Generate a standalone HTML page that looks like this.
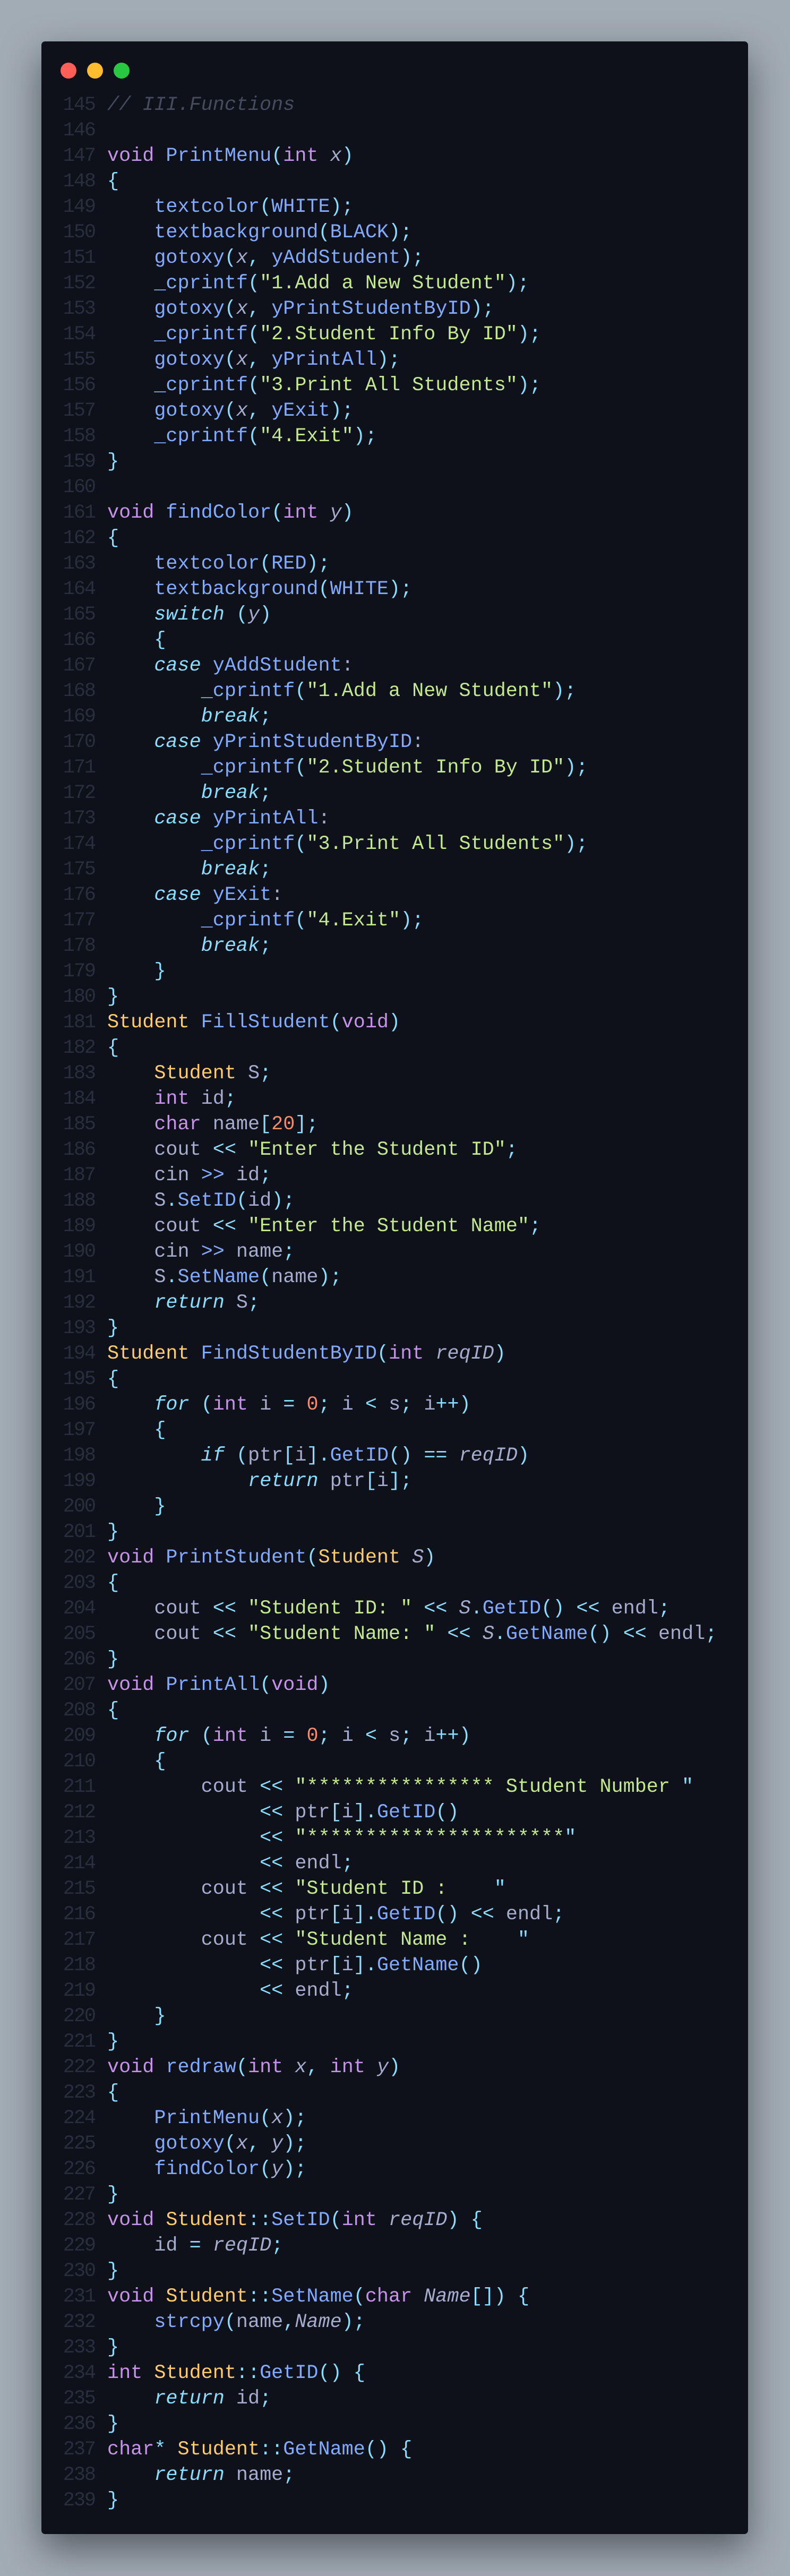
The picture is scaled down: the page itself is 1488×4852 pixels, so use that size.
<!DOCTYPE html>
<html><head><meta charset="utf-8"><style>
html,body{margin:0;padding:0}
body{width:1488px;height:4852px;background:#a2acb5;position:relative;overflow:hidden}
.win{position:absolute;left:78px;top:78px;width:1331px;height:4695px;background:#0f111a;border-radius:7px;box-shadow:0 28px 70px rgba(20,25,32,.55)}
.dot{position:absolute;width:30px;height:30px;border-radius:50%}
.code,.gut{position:absolute;top:174px;font-family:"Liberation Mono",monospace;font-size:36.8px;line-height:48px;white-space:pre}
.gut{left:100px;width:79px;text-align:right;color:#292d3e;letter-spacing:-2px}
.code{left:202px;color:#a6accd}
.k{color:#c792ea}.f{color:#82aaff}.p{color:#89ddff}.s{color:#c3e88d}.n{color:#f78c6c}.t{color:#ffcb6b}
.i{color:#89ddff;font-style:italic}.a{color:#a6accd;font-style:italic}.c{color:#464b5d;font-style:italic}
</style></head><body>
<div class="win"></div>
<div class="dot" style="left:114px;top:118px;background:#ff5f57"></div>
<div class="dot" style="left:164px;top:118px;background:#febc2e"></div>
<div class="dot" style="left:214px;top:118px;background:#28c840"></div>
<div class="gut">145
146
147
148
149
150
151
152
153
154
155
156
157
158
159
160
161
162
163
164
165
166
167
168
169
170
171
172
173
174
175
176
177
178
179
180
181
182
183
184
185
186
187
188
189
190
191
192
193
194
195
196
197
198
199
200
201
202
203
204
205
206
207
208
209
210
211
212
213
214
215
216
217
218
219
220
221
222
223
224
225
226
227
228
229
230
231
232
233
234
235
236
237
238
239</div>
<div class="code"><span class="c">// III.Functions</span>

<span class="k">void</span> <span class="f">PrintMenu</span><span class="p">(</span><span class="k">int</span> <span class="a">x</span><span class="p">)</span>
<span class="p">{</span>
    <span class="f">textcolor</span><span class="p">(</span><span class="f">WHITE</span><span class="p">);</span>
    <span class="f">textbackground</span><span class="p">(</span><span class="f">BLACK</span><span class="p">);</span>
    <span class="f">gotoxy</span><span class="p">(</span><span class="a">x</span><span class="p">,</span> <span class="f">yAddStudent</span><span class="p">);</span>
    <span class="f">_cprintf</span><span class="p">(</span><span class="s">"1.Add a New Student"</span><span class="p">);</span>
    <span class="f">gotoxy</span><span class="p">(</span><span class="a">x</span><span class="p">,</span> <span class="f">yPrintStudentByID</span><span class="p">);</span>
    <span class="f">_cprintf</span><span class="p">(</span><span class="s">"2.Student Info By ID"</span><span class="p">);</span>
    <span class="f">gotoxy</span><span class="p">(</span><span class="a">x</span><span class="p">,</span> <span class="f">yPrintAll</span><span class="p">);</span>
    <span class="f">_cprintf</span><span class="p">(</span><span class="s">"3.Print All Students"</span><span class="p">);</span>
    <span class="f">gotoxy</span><span class="p">(</span><span class="a">x</span><span class="p">,</span> <span class="f">yExit</span><span class="p">);</span>
    <span class="f">_cprintf</span><span class="p">(</span><span class="s">"4.Exit"</span><span class="p">);</span>
<span class="p">}</span>

<span class="k">void</span> <span class="f">findColor</span><span class="p">(</span><span class="k">int</span> <span class="a">y</span><span class="p">)</span>
<span class="p">{</span>
    <span class="f">textcolor</span><span class="p">(</span><span class="f">RED</span><span class="p">);</span>
    <span class="f">textbackground</span><span class="p">(</span><span class="f">WHITE</span><span class="p">);</span>
    <span class="i">switch</span> <span class="p">(</span><span class="a">y</span><span class="p">)</span>
    <span class="p">{</span>
    <span class="i">case</span> <span class="f">yAddStudent</span>:
        <span class="f">_cprintf</span><span class="p">(</span><span class="s">"1.Add a New Student"</span><span class="p">);</span>
        <span class="i">break</span><span class="p">;</span>
    <span class="i">case</span> <span class="f">yPrintStudentByID</span>:
        <span class="f">_cprintf</span><span class="p">(</span><span class="s">"2.Student Info By ID"</span><span class="p">);</span>
        <span class="i">break</span><span class="p">;</span>
    <span class="i">case</span> <span class="f">yPrintAll</span>:
        <span class="f">_cprintf</span><span class="p">(</span><span class="s">"3.Print All Students"</span><span class="p">);</span>
        <span class="i">break</span><span class="p">;</span>
    <span class="i">case</span> <span class="f">yExit</span>:
        <span class="f">_cprintf</span><span class="p">(</span><span class="s">"4.Exit"</span><span class="p">);</span>
        <span class="i">break</span><span class="p">;</span>
    <span class="p">}</span>
<span class="p">}</span>
<span class="t">Student</span> <span class="f">FillStudent</span><span class="p">(</span><span class="k">void</span><span class="p">)</span>
<span class="p">{</span>
    <span class="t">Student</span> S<span class="p">;</span>
    <span class="k">int</span> id<span class="p">;</span>
    <span class="k">char</span> name<span class="p">[</span><span class="n">20</span><span class="p">];</span>
    cout <span class="p">&lt;&lt;</span> <span class="s">"Enter the Student ID"</span><span class="p">;</span>
    cin <span class="f">&gt;&gt;</span> id<span class="p">;</span>
    S<span class="p">.</span><span class="f">SetID</span><span class="p">(</span>id<span class="p">);</span>
    cout <span class="p">&lt;&lt;</span> <span class="s">"Enter the Student Name"</span><span class="p">;</span>
    cin <span class="f">&gt;&gt;</span> name<span class="p">;</span>
    S<span class="p">.</span><span class="f">SetName</span><span class="p">(</span>name<span class="p">);</span>
    <span class="i">return</span> S<span class="p">;</span>
<span class="p">}</span>
<span class="t">Student</span> <span class="f">FindStudentByID</span><span class="p">(</span><span class="k">int</span> <span class="a">reqID</span><span class="p">)</span>
<span class="p">{</span>
    <span class="i">for</span> <span class="p">(</span><span class="k">int</span> i <span class="p">=</span> <span class="n">0</span><span class="p">;</span> i <span class="p">&lt;</span> s<span class="p">;</span> i<span class="p">++)</span>
    <span class="p">{</span>
        <span class="i">if</span> <span class="p">(</span>ptr<span class="p">[</span>i<span class="p">].</span><span class="f">GetID</span><span class="p">()</span> <span class="p">==</span> <span class="a">reqID</span><span class="p">)</span>
            <span class="i">return</span> ptr<span class="p">[</span>i<span class="p">];</span>
    <span class="p">}</span>
<span class="p">}</span>
<span class="k">void</span> <span class="f">PrintStudent</span><span class="p">(</span><span class="t">Student</span> <span class="a">S</span><span class="p">)</span>
<span class="p">{</span>
    cout <span class="p">&lt;&lt;</span> <span class="s">"Student ID: "</span> <span class="p">&lt;&lt;</span> <span class="a">S</span><span class="p">.</span><span class="f">GetID</span><span class="p">()</span> <span class="p">&lt;&lt;</span> endl<span class="p">;</span>
    cout <span class="p">&lt;&lt;</span> <span class="s">"Student Name: "</span> <span class="p">&lt;&lt;</span> <span class="a">S</span><span class="p">.</span><span class="f">GetName</span><span class="p">()</span> <span class="p">&lt;&lt;</span> endl<span class="p">;</span>
<span class="p">}</span>
<span class="k">void</span> <span class="f">PrintAll</span><span class="p">(</span><span class="k">void</span><span class="p">)</span>
<span class="p">{</span>
    <span class="i">for</span> <span class="p">(</span><span class="k">int</span> i <span class="p">=</span> <span class="n">0</span><span class="p">;</span> i <span class="p">&lt;</span> s<span class="p">;</span> i<span class="p">++)</span>
    <span class="p">{</span>
        cout <span class="p">&lt;&lt;</span> <span class="s">"**************** Student Number </span><span class="p">"</span>
             <span class="p">&lt;&lt;</span> ptr<span class="p">[</span>i<span class="p">].</span><span class="f">GetID</span><span class="p">()</span>
             <span class="p">&lt;&lt;</span> <span class="s">"**********************</span><span class="p">"</span>
             <span class="p">&lt;&lt;</span> endl<span class="p">;</span>
        cout <span class="p">&lt;&lt;</span> <span class="s">"Student ID :    </span><span class="p">"</span>
             <span class="p">&lt;&lt;</span> ptr<span class="p">[</span>i<span class="p">].</span><span class="f">GetID</span><span class="p">()</span> <span class="p">&lt;&lt;</span> endl<span class="p">;</span>
        cout <span class="p">&lt;&lt;</span> <span class="s">"Student Name :    </span><span class="p">"</span>
             <span class="p">&lt;&lt;</span> ptr<span class="p">[</span>i<span class="p">].</span><span class="f">GetName</span><span class="p">()</span>
             <span class="p">&lt;&lt;</span> endl<span class="p">;</span>
    <span class="p">}</span>
<span class="p">}</span>
<span class="k">void</span> <span class="f">redraw</span><span class="p">(</span><span class="k">int</span> <span class="a">x</span><span class="p">,</span> <span class="k">int</span> <span class="a">y</span><span class="p">)</span>
<span class="p">{</span>
    <span class="f">PrintMenu</span><span class="p">(</span><span class="a">x</span><span class="p">);</span>
    <span class="f">gotoxy</span><span class="p">(</span><span class="a">x</span><span class="p">,</span> <span class="a">y</span><span class="p">);</span>
    <span class="f">findColor</span><span class="p">(</span><span class="a">y</span><span class="p">);</span>
<span class="p">}</span>
<span class="k">void</span> <span class="t">Student</span><span class="p">::</span><span class="f">SetID</span><span class="p">(</span><span class="k">int</span> <span class="a">reqID</span><span class="p">)</span> <span class="p">{</span>
    id <span class="p">=</span> <span class="a">reqID</span><span class="p">;</span>
<span class="p">}</span>
<span class="k">void</span> <span class="t">Student</span><span class="p">::</span><span class="f">SetName</span><span class="p">(</span><span class="k">char</span> <span class="a">Name</span><span class="p">[])</span> <span class="p">{</span>
    <span class="f">strcpy</span><span class="p">(</span>name<span class="p">,</span><span class="a">Name</span><span class="p">);</span>
<span class="p">}</span>
<span class="k">int</span> <span class="t">Student</span><span class="p">::</span><span class="f">GetID</span><span class="p">()</span> <span class="p">{</span>
    <span class="i">return</span> id<span class="p">;</span>
<span class="p">}</span>
<span class="k">char</span><span class="p">*</span> <span class="t">Student</span><span class="p">::</span><span class="f">GetName</span><span class="p">()</span> <span class="p">{</span>
    <span class="i">return</span> name<span class="p">;</span>
<span class="p">}</span></div>
</body></html>
